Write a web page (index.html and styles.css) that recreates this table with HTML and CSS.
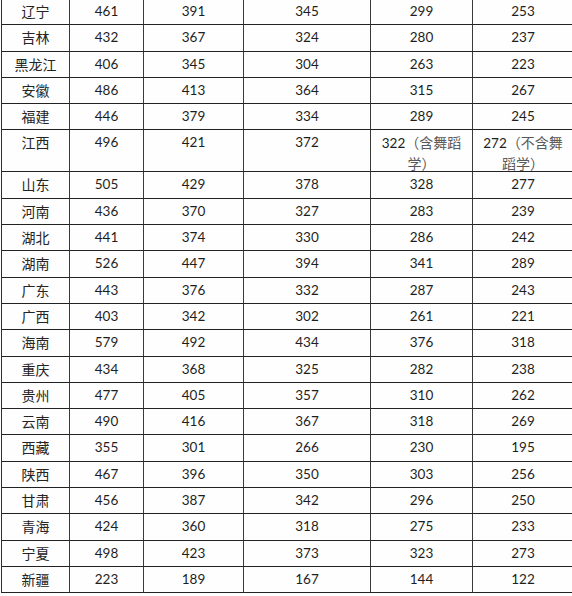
FILE: index.html
```html
<!DOCTYPE html>
<html lang="zh">
<head>
<meta charset="utf-8">
<title>分数线</title>
<link rel="stylesheet" href="styles.css">
</head>
<body>
<div class="sheet">
  <div class="c name">辽宁</div><div class="c">461</div><div class="c">391</div><div class="c">345</div><div class="c">299</div><div class="c">253</div>
  <div class="c name">吉林</div><div class="c">432</div><div class="c">367</div><div class="c">324</div><div class="c">280</div><div class="c">237</div>
  <div class="c name">黑龙江</div><div class="c">406</div><div class="c">345</div><div class="c">304</div><div class="c">263</div><div class="c">223</div>
  <div class="c name">安徽</div><div class="c">486</div><div class="c">413</div><div class="c">364</div><div class="c">315</div><div class="c">267</div>
  <div class="c name">福建</div><div class="c">446</div><div class="c">379</div><div class="c">334</div><div class="c">289</div><div class="c">245</div>
  <div class="c name">江西</div><div class="c">496</div><div class="c">421</div><div class="c">372</div><div class="c">322<span class="note">（含舞蹈<br>学）</span></div><div class="c">272<span class="note">（不含舞<br>蹈学）</span></div>
  <div class="c name">山东</div><div class="c">505</div><div class="c">429</div><div class="c">378</div><div class="c">328</div><div class="c">277</div>
  <div class="c name">河南</div><div class="c">436</div><div class="c">370</div><div class="c">327</div><div class="c">283</div><div class="c">239</div>
  <div class="c name">湖北</div><div class="c">441</div><div class="c">374</div><div class="c">330</div><div class="c">286</div><div class="c">242</div>
  <div class="c name">湖南</div><div class="c">526</div><div class="c">447</div><div class="c">394</div><div class="c">341</div><div class="c">289</div>
  <div class="c name">广东</div><div class="c">443</div><div class="c">376</div><div class="c">332</div><div class="c">287</div><div class="c">243</div>
  <div class="c name">广西</div><div class="c">403</div><div class="c">342</div><div class="c">302</div><div class="c">261</div><div class="c">221</div>
  <div class="c name">海南</div><div class="c">579</div><div class="c">492</div><div class="c">434</div><div class="c">376</div><div class="c">318</div>
  <div class="c name">重庆</div><div class="c">434</div><div class="c">368</div><div class="c">325</div><div class="c">282</div><div class="c">238</div>
  <div class="c name">贵州</div><div class="c">477</div><div class="c">405</div><div class="c">357</div><div class="c">310</div><div class="c">262</div>
  <div class="c name">云南</div><div class="c">490</div><div class="c">416</div><div class="c">367</div><div class="c">318</div><div class="c">269</div>
  <div class="c name">西藏</div><div class="c">355</div><div class="c">301</div><div class="c">266</div><div class="c">230</div><div class="c">195</div>
  <div class="c name">陕西</div><div class="c">467</div><div class="c">396</div><div class="c">350</div><div class="c">303</div><div class="c">256</div>
  <div class="c name">甘肃</div><div class="c">456</div><div class="c">387</div><div class="c">342</div><div class="c">296</div><div class="c">250</div>
  <div class="c name">青海</div><div class="c">424</div><div class="c">360</div><div class="c">318</div><div class="c">275</div><div class="c">233</div>
  <div class="c name">宁夏</div><div class="c">498</div><div class="c">423</div><div class="c">373</div><div class="c">323</div><div class="c">273</div>
  <div class="c name">新疆</div><div class="c">223</div><div class="c">189</div><div class="c">167</div><div class="c">144</div><div class="c">122</div>
</div>
</body>
</html>
```

FILE: styles.css
```css
html, body {
  margin: 0;
  padding: 0;
  background: #fefefe;
  overflow: hidden;
}

body {
  width: 572px;
  height: 596px;
}

.sheet {
  display: grid;
  grid-template-columns: 68px 74px 100px 127px 102px 101px;
  grid-template-rows: repeat(5, 26.3px) 42px repeat(16, 26.3px);
  margin: -1px 0 0 1px;
  border-left: 1px solid #2e2e2e;
  width: max-content;
  font-family: Lato, "Noto Sans CJK SC", sans-serif;
  font-size: 13.5px;
  color: #1e1e1e;
}

.c {
  box-sizing: border-box;
  border-right: 1px solid #3a3a3a;
  border-bottom: 1px solid #222;
  padding: 2px 4px 0;
  line-height: 20px;
  text-align: center;
  overflow: hidden;
}

.name {
  font-family: "Noto Sans CJK SC", sans-serif;
  font-size: 14px;
  color: #242424;
}

.note {
  font-family: "Noto Sans CJK SC", sans-serif;
  font-size: 14px;
  color: #5a5a5a;
}
```
